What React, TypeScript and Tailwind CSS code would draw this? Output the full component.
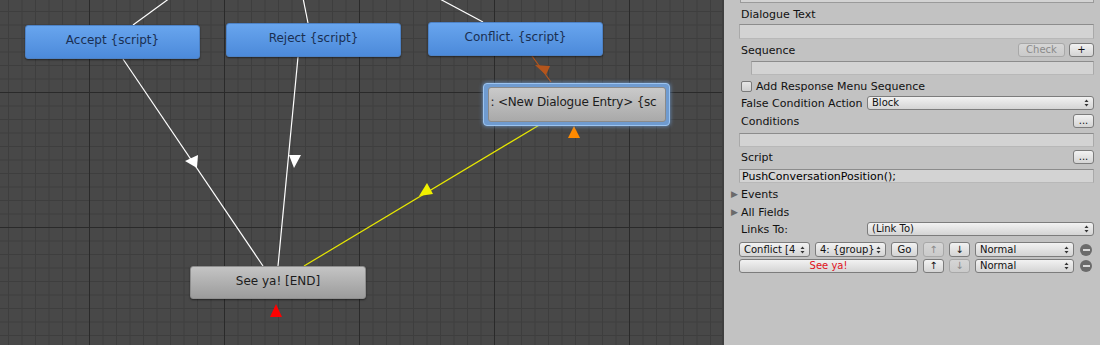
import React from "react";

const font = { fontFamily: '"DejaVu Sans", Verdana, sans-serif' };

function UpDown() {
    return (
        <svg width="5" height="8" viewBox="0 0 5 8" className="shrink-0">
            <path d="M2.5 0.5 L4.5 3 H0.5 Z" fill="#333" />
            <path d="M2.5 7.5 L4.5 5 H0.5 Z" fill="#333" />
        </svg>
    );
}

function Btn({
    children,
    className = "",
    disabled = false,
}: {
    children: React.ReactNode;
    className?: string;
    disabled?: boolean;
}) {
    return (
        <div
            className={
                "flex items-center justify-center rounded-[3px] border text-[10px] leading-none " +
                (disabled
                    ? "border-[#a8a8a8] bg-gradient-to-b from-[#d6d6d6] to-[#cacaca] text-[#8a8a8a] "
                    : "border-[#7c7c7c] bg-gradient-to-b from-[#f2f2f2] to-[#d4d4d4] text-[#111] ") +
                className
            }
        >
            {children}
        </div>
    );
}

function Popup({ label, className = "" }: { label: string; className?: string }) {
    return (
        <div
            className={
                "flex items-center justify-between rounded-[3px] border border-[#7c7c7c] bg-gradient-to-b from-[#f2f2f2] to-[#d4d4d4] pl-[4px] pr-[4px] text-[10px] leading-none text-[#111] " +
                className
            }
        >
            <span className="overflow-hidden whitespace-nowrap">{label}</span>
            <UpDown />
        </div>
    );
}

function Field({ children, className = "" }: { children?: React.ReactNode; className?: string }) {
    return (
        <div
            className={
                "flex items-center border border-t-[#8c8c8c] border-x-[#a9a9a9] border-b-[#b8b8b8] bg-[#d3d3d3] px-[2px] text-[11px] leading-none text-[#000] " +
                className
            }
        >
            {children}
        </div>
    );
}

function Minus() {
    return (
        <div className="ml-[6px] flex h-[12px] w-[12px] items-center justify-center rounded-full bg-[#6b6b6b]">
            <div className="h-[2px] w-[7px] bg-[#d8d8d8]" />
        </div>
    );
}

function Grid() {
    const minor = [];
    for (let i = 1; i < 10; i++) minor.push(i * 13.5);
    return (
        <svg className="absolute inset-0" width="722" height="345">
            <defs>
                <pattern id="g" x="89" y="92" width="135" height="135" patternUnits="userSpaceOnUse">
                    <rect width="135" height="135" fill="#484848" />
                    {minor.map((m) => (
                        <g key={m}>
                            <line x1={m + 0.5} y1="0" x2={m + 0.5} y2="135" stroke="#3e3e3e" strokeWidth="1" />
                            <line x1="0" y1={m + 0.5} x2="135" y2={m + 0.5} stroke="#3e3e3e" strokeWidth="1" />
                        </g>
                    ))}
                    <line x1="0.5" y1="0" x2="0.5" y2="135" stroke="#2a2a2a" strokeWidth="1" />
                    <line x1="0" y1="0.5" x2="135" y2="0.5" stroke="#2a2a2a" strokeWidth="1" />
                </pattern>
            </defs>
            <rect width="722" height="345" fill="url(#g)" />
        </svg>
    );
}

function Links() {
    return (
        <svg className="absolute inset-0" width="722" height="345">
            {/* incoming from above */}
            <line x1="170" y1="-2" x2="133" y2="25" stroke="#fff" strokeWidth="1.2" />
            <line x1="303" y1="-2" x2="308" y2="23" stroke="#fff" strokeWidth="1.2" />
            <line x1="438" y1="-2" x2="483" y2="22" stroke="#fff" strokeWidth="1.2" />
            {/* to See ya */}
            <line x1="123" y1="59" x2="263" y2="266" stroke="#fff" strokeWidth="1.2" />
            <polygon points="185,161 198,155 197,168" fill="#fff" />
            <line x1="298" y1="57" x2="278" y2="266" stroke="#fff" strokeWidth="1.2" />
            <polygon points="289,155 301,155 294,168" fill="#fff" />
            <line x1="541" y1="124" x2="304" y2="266" stroke="#e8e800" strokeWidth="1.2" />
            <polygon points="419,196 433,194 427,183" fill="#f0f000" />
            {/* conflict to new entry */}
            <line x1="532" y1="56" x2="551" y2="82" stroke="#b4551c" strokeWidth="1.2" />
            <polygon points="535,65 550,66 546,75" fill="#b4551c" />
            {/* outgoing markers */}
            <polygon points="574,126 580,138 568,138" fill="#ff8a00" />
            <polygon points="276,304 282,317 270,317" fill="#ff0000" />
        </svg>
    );
}

function BlueNode({ label, x, y }: { label: string; x: number; y: number }) {
    return (
        <div
            className="absolute flex h-[34px] w-[175px] items-center justify-center rounded-[3px] border border-[#4d82c6] bg-gradient-to-b from-[#68a5ee] to-[#4c8ada] pb-[5px] text-[12px] text-[#1a2f52] shadow-[0_1px_2px_rgba(0,0,0,0.5)]"
            style={{ left: x, top: y }}
        >
            {label}
        </div>
    );
}

export default function App() {
    return (
        <div className="flex h-[345px] w-[1100px] overflow-hidden" style={font}>
            <div className="relative h-full w-[722px] shrink-0 overflow-hidden">
                <Grid />
                <Links />
                <BlueNode label="Accept {script}" x={25} y={25} />
                <BlueNode label="Reject {script}" x={226} y={23} />
                <BlueNode label="Conflict. {script}" x={428} y={22} />
                <div className="absolute left-[483px] top-[83px] flex h-[43px] w-[187px] items-center justify-center rounded-[4px] border border-[#9cc4f0] bg-[#6f9bd0] shadow-[0_0_4px_rgba(120,175,240,0.8)]">
                    <div className="flex h-[35px] w-[178px] items-center overflow-hidden whitespace-nowrap rounded-[3px] border border-[#8a8a8a] bg-gradient-to-b from-[#cacaca] to-[#a9a9a9] pb-[5px] pl-[2px] text-[12px] tracking-[-0.2px] text-[#1c1c1c]">
                        : &lt;New Dialogue Entry&gt; {"{sc"}
                    </div>
                </div>
                <div className="absolute left-[190px] top-[266px] flex h-[33px] w-[176px] items-center justify-center rounded-[3px] border border-[#8e8e8e] bg-gradient-to-b from-[#c4c4c4] to-[#9c9c9c] pb-[4px] text-[12px] text-[#1c1c1c] shadow-[0_1px_2px_rgba(0,0,0,0.5)]">
                    See ya! [END]
                </div>
            </div>

            <div className="h-full flex-1 border-l-2 border-[#3f3f3f] bg-[#c2c2c2] pl-[15px] pr-[6px] text-[11px] leading-none text-[#111]">
                <div className="ml-[1px] h-[3px] border-x border-b border-[#9a9a9a] bg-[#d3d3d3]" />
                <div className="mt-[4px] flex h-[15px] items-center pl-[2px]">Dialogue Text</div>
                <Field className="mt-[2px] h-[15px]" />
                <div className="mt-[3px] flex h-[15px] items-center pl-[2px]">
                    <span className="flex-1 pt-[1px]">Sequence</span>
                    <Btn disabled className="h-[14px] w-[47px]">Check</Btn>
                    <Btn className="ml-[4px] h-[14px] w-[25px]">+</Btn>
                </div>
                <Field className="ml-[12px] mt-[4px] h-[14px]" />
                <div className="mt-[4px] flex h-[14px] items-center pl-[2px]">
                    <div className="h-[11px] w-[11px] rounded-[2px] border border-[#7a7a7a] bg-gradient-to-b from-[#e6e6e6] to-[#cfcfcf]" />
                    <span className="ml-[4px]">Add Response Menu Sequence</span>
                </div>
                <div className="mt-[3px] flex h-[14px] items-center pl-[2px]">
                    <span className="w-[126px] shrink-0 whitespace-nowrap pt-[1px]">False Condition Action</span>
                    <Popup label="Block" className="h-[14px] flex-1" />
                </div>
                <div className="mt-[4px] flex h-[14px] items-center pl-[2px]">
                    <span className="flex-1 pt-[1px]">Conditions</span>
                    <Btn className="h-[14px] w-[21px]">...</Btn>
                </div>
                <Field className="mt-[5px] h-[14px]" />
                <div className="mt-[3px] flex h-[14px] items-center pl-[2px]">
                    <span className="flex-1 pt-[1px]">Script</span>
                    <Btn className="h-[14px] w-[21px]">...</Btn>
                </div>
                <Field className="mt-[5px] h-[14px]">PushConversationPosition();</Field>
                <div className="mt-[3px] flex h-[16px] items-center">
                    <span className="ml-[-8px] w-[10px] text-[9px] text-[#6a6a6a]">▶</span>
                    <span>Events</span>
                </div>
                <div className="mt-[2px] flex h-[16px] items-center">
                    <span className="ml-[-8px] w-[10px] text-[9px] text-[#6a6a6a]">▶</span>
                    <span>All Fields</span>
                </div>
                <div className="mt-[2px] flex h-[14px] items-center pl-[2px]">
                    <span className="w-[126px] shrink-0 pt-[1px]">Links To:</span>
                    <Popup label="(Link To)" className="h-[14px] flex-1" />
                </div>
                <div className="mt-[6px] flex h-[15px] items-center">
                    <Popup label="Conflict [4" className="h-[15px] w-[71px]" />
                    <Popup label="4: {group}" className="ml-[5px] h-[15px] w-[71px] pr-[3px]" />
                    <Btn className="ml-[5px] h-[15px] w-[27px]">Go</Btn>
                    <Btn disabled className="ml-[5px] h-[15px] w-[21px]">↑</Btn>
                    <Btn className="ml-[5px] h-[15px] w-[21px]">↓</Btn>
                    <Popup label="Normal" className="ml-[5px] h-[15px] w-[99px]" />
                    <Minus />
                </div>
                <div className="mt-[2px] flex h-[14px] items-center">
                    <Btn className="h-[14px] w-[179px] !text-[#e0101a]">See ya!</Btn>
                    <Btn className="ml-[5px] h-[14px] w-[21px]">↑</Btn>
                    <Btn disabled className="ml-[5px] h-[14px] w-[21px]">↓</Btn>
                    <Popup label="Normal" className="ml-[5px] h-[14px] w-[99px]" />
                    <Minus />
                </div>
            </div>
        </div>
    );
}
